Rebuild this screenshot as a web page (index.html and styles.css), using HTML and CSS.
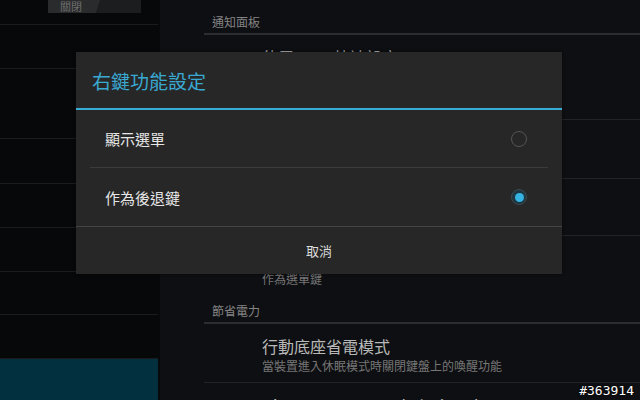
FILE: index.html
```html
<!DOCTYPE html>
<html>
<head>
    <title>右鍵功能設定</title>
    <link rel="stylesheet" href="styles.css">
</head>
<body>
    <div class="screen">
        <div class="left-pane">
            <div class="left-item first">
                <div class="toggle">
                    <span class="toggle-thumb">關閉</span>
                </div>
            </div>
            <div class="left-item h44"></div>
            <div class="left-item h70"></div>
            <div class="left-item h45"></div>
            <div class="left-item h44"></div>
            <div class="left-item h44"></div>
            <div class="left-item h43"></div>
            <div class="left-item h44"></div>
            <div class="left-item selected"></div>
        </div>

        <div class="right-pane">
            <div class="section-header">通知面板</div>
            <div class="pref-item h85">
                <div class="pref-title">使用ASUS快速設定</div>
                <div class="pref-summary">在通知面板中顯示快速設定</div>
            </div>
            <div class="pref-item h59">
                <div class="pref-title">鍵盤設定</div>
            </div>
            <div class="pref-item h57">
                <div class="pref-title">觸控板設定</div>
            </div>
            <div class="pref-item last h52">
                <div class="pref-summary">作為選單鍵</div>
            </div>
            <div class="section-header">節省電力</div>
            <div class="pref-item">
                <div class="pref-title">行動底座省電模式</div>
                <div class="pref-summary">當裝置進入休眠模式時關閉鍵盤上的喚醒功能</div>
            </div>
            <div class="pref-item">
                <div class="pref-title">Disconnect network during sleep</div>
            </div>
        </div>

        <div class="dialog">
            <div class="dialog-title">右鍵功能設定</div>
            <div class="dialog-list">
                <div class="choice">
                    <span>顯示選單</span>
                    <span class="radio"></span>
                </div>
                <div class="choice">
                    <span>作為後退鍵</span>
                    <span class="radio checked"></span>
                </div>
            </div>
            <div class="dialog-button">取消</div>
        </div>

        <div class="watermark">#363914</div>
    </div>
</body>
</html>
```

FILE: styles.css
```css
body {
    margin: 0;
    background: #0d0e10;
    font-family: "Noto Sans CJK TC", "Noto Sans", sans-serif;
}
.screen {
    position: relative;
    width: 640px;
    height: 400px;
    overflow: hidden;
    display: flex;
}

/* left list */
.left-pane {
    width: 160px;
    flex-shrink: 0;
    background: #070809;
    display: flex;
    flex-direction: column;
}
.left-item {
    border-bottom: 1px solid #1a1b1d;
    box-sizing: border-box;
    margin-right: 2px;
}
.left-item.first {
    height: 25px;
    position: relative;
}
.h44 { height: 44px; }
.h70 { height: 70px; }
.h45 { height: 45px; }
.h43 { height: 43px; }
.left-item.selected {
    flex: 1;
    border: none;
    margin-right: 2px;
    background: #03303f;
}
.toggle {
    position: absolute;
    left: 48px;
    top: 0;
    width: 93px;
    height: 13px;
    background: #1c1d1f;
}
.toggle-thumb {
    display: block;
    width: 52px;
    height: 13px;
    padding-left: 12px;
    box-sizing: border-box;
    background: #2a2b2d;
    clip-path: polygon(0 0, 100% 0, 92% 100%, 0 100%);
    color: #6e6e6e;
    font-size: 11px;
    line-height: 13px;
}

/* right preferences */
.right-pane {
    flex: 1;
    padding-left: 44px;
    background: #0e0f12;
}
.section-header {
    height: 35px;
    box-sizing: border-box;
    padding: 14px 0 0 8px;
    border-bottom: 2px solid #2c2d30;
    color: #848484;
    font-size: 12px;
    line-height: 16px;
}
.pref-item {
    box-sizing: border-box;
    padding: 11px 0 8px 58px;
    border-bottom: 1px solid #222326;
}
.pref-item.last {
    border-bottom: none;
}
.h85 { height: 85px; }
.h59 { height: 59px; }
.h57 { height: 57px; }
.h52 { height: 53px; padding-top: 34px; }
.pref-title {
    color: #b8b8b8;
    font-size: 16px;
    line-height: 22px;
}
.pref-summary {
    color: #767676;
    font-size: 12px;
    line-height: 17px;
}

/* dialog */
.dialog {
    position: absolute;
    left: 76px;
    top: 52px;
    width: 486px;
    height: 222px;
    background: #272727;
    box-shadow: 0 0 3px rgba(0, 0, 0, 0.6);
    display: flex;
    flex-direction: column;
}
.dialog-title {
    height: 58px;
    box-sizing: border-box;
    padding: 15px 0 0 16px;
    border-bottom: 2px solid #36acd6;
    color: #3aa9d2;
    font-size: 19px;
    line-height: 28px;
}
.dialog-list {
    padding: 0 14px;
}
.choice {
    height: 58px;
    box-sizing: border-box;
    display: flex;
    align-items: center;
    justify-content: space-between;
    padding: 0 21px 0 15px;
    border-bottom: 1px solid #3b3b3b;
    color: #e6e6e6;
    font-size: 15px;
}
.choice:last-child {
    border-bottom: none;
}
.radio {
    width: 14px;
    height: 14px;
    border: 1px solid #545454;
    border-radius: 50%;
    box-sizing: content-box;
    display: flex;
    align-items: center;
    justify-content: center;
}
.radio.checked {
    background: #1e3640;
    border-color: #3d4a50;
}
.radio.checked::after {
    content: "";
    width: 9px;
    height: 9px;
    border-radius: 50%;
    background: #35b4e4;
}
.dialog-button {
    flex: 1;
    border-top: 1px solid #444;
    display: flex;
    align-items: center;
    justify-content: center;
    color: #dcdcdc;
    font-size: 13px;
}

.watermark {
    position: absolute;
    right: 6px;
    bottom: 2px;
    color: #ffffff;
    font-family: "DejaVu Sans Mono", monospace;
    font-size: 13px;
    text-shadow: 0 0 2px #000;
}
```
